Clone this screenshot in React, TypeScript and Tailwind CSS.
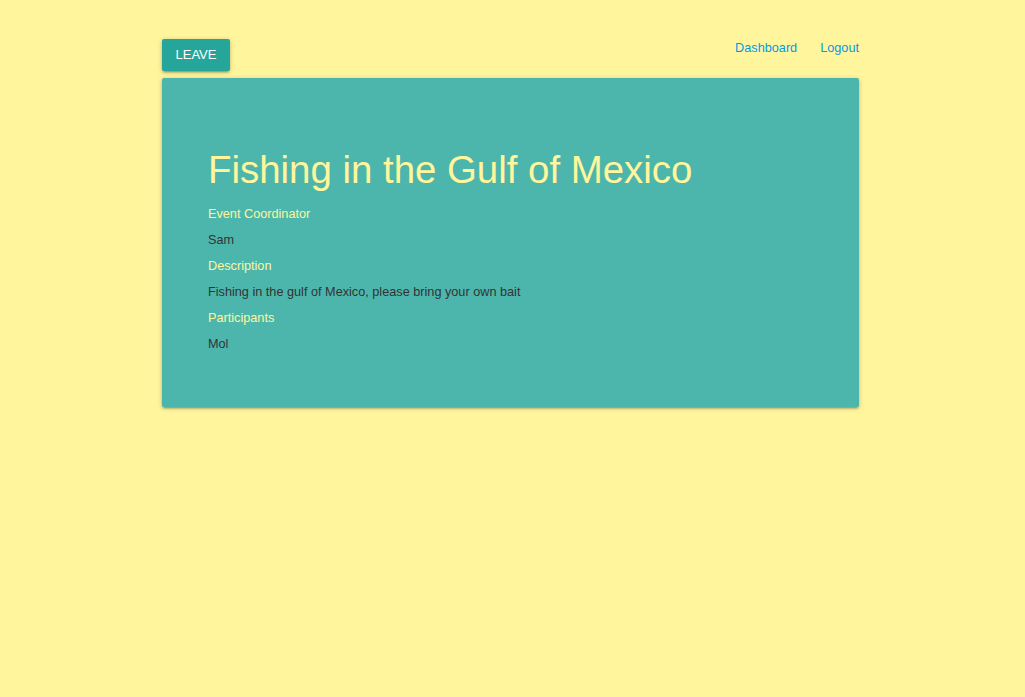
export default function App() {
  return (
    <div className="min-h-[697px] bg-[#fff59d] font-['Liberation_Sans',Arial,sans-serif]">
      <div className="ml-[162px] w-[697px] pt-[39px]">
        <div className="flex items-start justify-between">
          <button className="h-[32px] w-[68px] rounded-[2px] bg-[#26a69a] text-[13px] text-white shadow-[0_2px_2px_0_rgba(0,0,0,0.14),0_3px_1px_-2px_rgba(0,0,0,0.12),0_1px_5px_0_rgba(0,0,0,0.2)]">
            LEAVE
          </button>
          <div className="flex gap-[23px] pt-[1px] text-[12.7px] leading-[16px] text-[#039be5]">
            <a>Dashboard</a>
            <a>Logout</a>
          </div>
        </div>
        <div className="mt-[7px] rounded-[2px] bg-[#4db6ac] px-[46px] pt-[70px] pb-[50px] shadow-[0_2px_2px_0_rgba(0,0,0,0.14),0_3px_1px_-2px_rgba(0,0,0,0.12),0_1px_5px_0_rgba(0,0,0,0.2)]">
          <h1 className="text-[38.4px] leading-[44px] text-[#fff59d]">Fishing in the Gulf of Mexico</h1>
          <div className="mt-[9px] flex flex-col text-[12.7px] leading-[26px]">
            <span className="text-[#fff59d]">Event Coordinator</span>
            <span className="text-[#333]">Sam</span>
            <span className="text-[#fff59d]">Description</span>
            <span className="text-[#333]">Fishing in the gulf of Mexico, please bring your own bait</span>
            <span className="text-[#fff59d]">Participants</span>
            <span className="text-[#333]">Mol</span>
          </div>
        </div>
      </div>
    </div>
  );
}
